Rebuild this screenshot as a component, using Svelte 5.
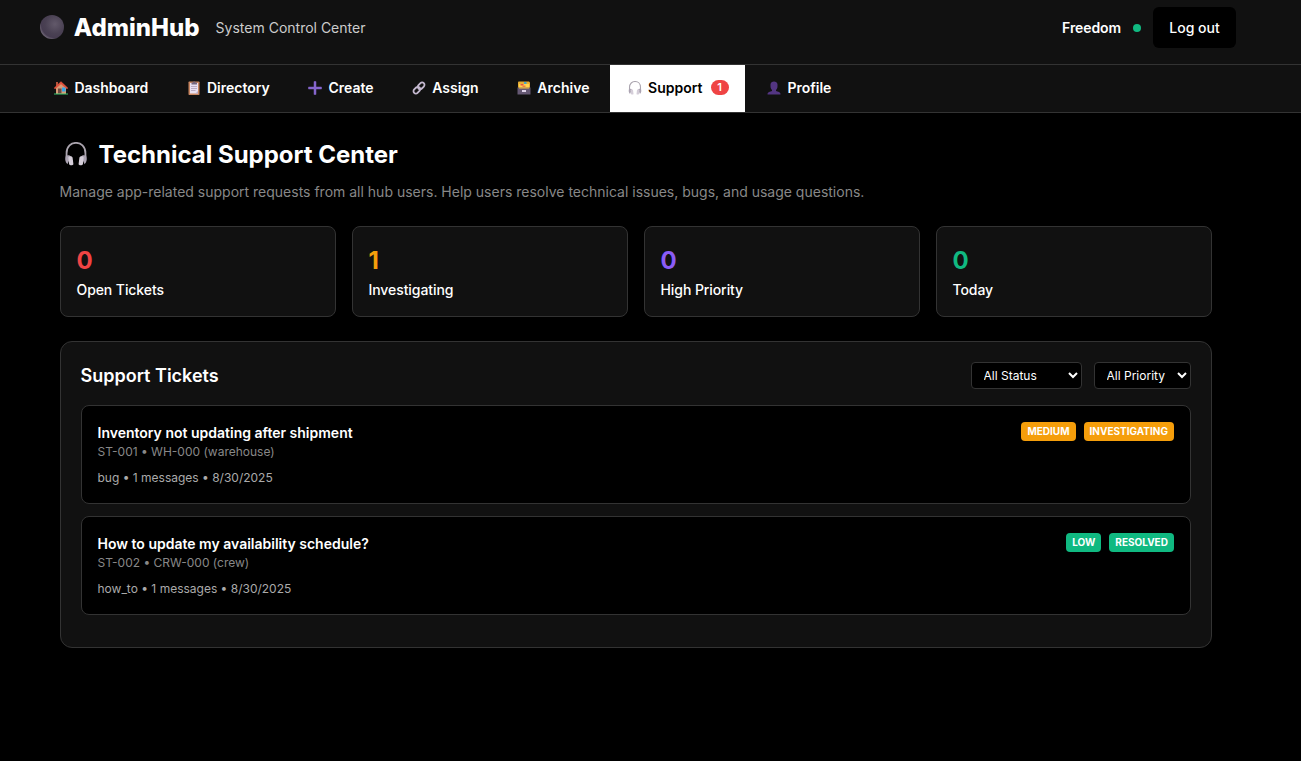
<script>
  const tabs = [
    { icon: 'house', label: 'Dashboard' },
    { icon: 'clipboard', label: 'Directory' },
    { icon: 'plus', label: 'Create' },
    { icon: 'link', label: 'Assign' },
    { icon: 'archive', label: 'Archive' },
    { icon: 'headphones', label: 'Support', badge: 1, active: true },
    { icon: 'person', label: 'Profile' }
  ];
  const stats = [
    { value: 0, label: 'Open Tickets', tone: 'red' },
    { value: 1, label: 'Investigating', tone: 'orange' },
    { value: 0, label: 'High Priority', tone: 'purple' },
    { value: 0, label: 'Today', tone: 'green' }
  ];
  const tickets = [
    {
      title: 'Inventory not updating after shipment',
      source: 'ST-001 • WH-000 (warehouse)',
      meta: 'bug • 1 messages • 8/30/2025',
      tags: ['MEDIUM', 'INVESTIGATING'],
      tone: 'orange'
    },
    {
      title: 'How to update my availability schedule?',
      source: 'ST-002 • CRW-000 (crew)',
      meta: 'how_to • 1 messages • 8/30/2025',
      tags: ['LOW', 'RESOLVED'],
      tone: 'green'
    }
  ];
</script>

{#snippet glyph(name)}
  <svg class="glyph" viewBox="0 0 28 28" aria-hidden="true">
    {#if name === 'house'}
      <path d="M4 2h4v8H4z" fill="#b5543c" />
      <path d="M4 13 14 3l10 10v13H4z" fill="#d79b77" />
      <path d="M14 1 0 14l2 2L14 6l12 10 2-2z" fill="#e0523d" stroke="#e0523d" stroke-width=".6" />
      <path d="M8 15h7v10H8z" fill="#6d4a43" />
      <path d="M16 13h7v8h-7z" fill="#32a7e8" />
      <path d="M0 25h28v2H0z" fill="#36c46f" />
    {:else if name === 'clipboard'}
      <rect x="3" y="1" width="22" height="27" rx="1.5" fill="#c98661" />
      <path d="M6 4h16v21H6z" fill="#e9e0f1" />
      <path d="M17 25h5v-5z" fill="#b8a9c9" />
      <path d="M9 3h3l1-2h3l1 2h3v4H9z" fill="#75677f" />
      <path d="M8 11h12M8 15h12M8 19h9" stroke="#a99bb5" stroke-width="1.5" />
    {:else if name === 'plus'}
      <path d="M12 1h4v11h11v4H16v11h-4V16H1v-4h11z" fill="#8565cc" stroke="#8565cc" stroke-linejoin="round" />
    {:else if name === 'link'}
      <g fill="none" stroke="#c5b9d0" stroke-width="3.6">
        <rect x="-7.5" y="-4.7" width="15" height="9.4" rx="4.7" transform="translate(18.3 9.7) rotate(-45)" />
        <rect x="-7.5" y="-4.7" width="15" height="9.4" rx="4.7" transform="translate(9.7 18.3) rotate(-45)" />
      </g>
    {:else if name === 'archive'}
      <path d="M2 3c0-1 1-2 2-2h20l2 2v13H2z" fill="#e6ad34" />
      <path d="M4 6h20v9H4z" fill="#ffd34e" />
      <path d="M7 6h6v3H7z" fill="#e95343" />
      <path d="M14 2h5v4h-5z" fill="#46a5c9" />
      <path d="M11 9h6v3h-6z" fill="#ed7d46" />
      <path d="M1 13h26v14H1z" fill="#655873" />
      <path d="M4 13h20v2H4z" fill="#f4bd3e" />
      <path d="M10 18h8v4h-8z" fill="#e0d4ea" />
    {:else if name === 'headphones'}
      <path d="M3 17v-4C3-3 25-3 25 13v4" fill="none" stroke="#aaa4ae" stroke-width="2.1" />
      <path d="M2 16c-1 3-1 7 2 10l4-9c-1-2-4-2-6-1zM26 16c1 3 1 7-2 10l-4-9c1-2 4-2 6-1z" fill="#aaa2b1" />
      <path d="M5 18c1-2 4-2 5 0l1 8c0 1-4 2-5 0zM23 18c-1-2-4-2-5 0l-1 8c0 1 4 2 5 0z" fill="#d5ced9" />
    {:else if name === 'person'}
      <path d="M7 7c0-8 14-8 14 0v4c0 4-2 6-3 7v2l6 2c2 1 3 2 3 5H1c0-3 1-4 3-5l6-2v-2c-1-1-3-3-3-7z" fill="#533582" />
    {/if}
  </svg>
{/snippet}

<div class="page">
  <header>
    <div class="brand">
      <svg class="moon" viewBox="0 0 24 24" aria-hidden="true">
        <defs>
          <radialGradient id="moon-fill" cx=".62" cy=".38" r=".66">
            <stop offset="0" stop-color="#62596a" />
            <stop offset=".6" stop-color="#4a4153" />
            <stop offset=".85" stop-color="#463c50" />
            <stop offset="1" stop-color="#706777" />
          </radialGradient>
        </defs>
        <circle cx="12" cy="12" r="12" fill="url(#moon-fill)" />
      </svg>
      <span class="name">AdminHub</span>
      <span class="tagline">System Control Center</span>
    </div>
    <div class="account">
      <span class="user">Freedom</span>
      <span class="dot"></span>
      <button class="logout">Log out</button>
    </div>
  </header>

  <nav>
    {#each tabs as tab}
      <a class="tab" class:active={tab.active}>
        <span class="slot">{@render glyph(tab.icon)}</span>
        <span>{tab.label}</span>
        {#if tab.badge}<span class="count">{tab.badge}</span>{/if}
      </a>
    {/each}
  </nav>

  <main>
    <h1><span class="title-icon">{@render glyph('headphones')}</span>Technical Support Center</h1>
    <p class="lead">Manage app-related support requests from all hub users. Help users resolve technical issues, bugs, and usage questions.</p>

    <section class="stats">
      {#each stats as stat}
        <div class="stat">
          <div class="value {stat.tone}">{stat.value}</div>
          <div class="label">{stat.label}</div>
        </div>
      {/each}
    </section>

    <section class="panel">
      <div class="panel-head">
        <h2>Support Tickets</h2>
        <div class="filters">
          <select class="status"><option>All Status</option></select>
          <select class="priority"><option>All Priority</option></select>
        </div>
      </div>
      {#each tickets as ticket}
        <article>
          <div class="info">
            <h3>{ticket.title}</h3>
            <div class="source">{ticket.source}</div>
            <div class="meta">{ticket.meta}</div>
          </div>
          <div class="tags">
            {#each ticket.tags as tag}
              <span class="tag {ticket.tone}">{tag}</span>
            {/each}
          </div>
        </article>
      {/each}
    </section>
  </main>
</div>

<style>
  :global(body) { background: #000; }
  .page {
    min-height: 761px;
    box-sizing: border-box;
    background: #000;
    color: #fff;
    font-family: Inter, sans-serif;
    font-size: 14px;
  }
  .page :global(*) { box-sizing: border-box; }
  header {
    display: flex;
    justify-content: space-between;
    height: 65px;
    padding: 7px 65px 16px 39.5px;
    background: #111;
    border-bottom: 1px solid #333;
  }
  .brand, .account { display: flex; align-items: center; height: 41px; }
  .moon { width: 24px; height: 24px; margin-top: -1px; }
  .name { margin-left: 10.3px; font-size: 24px; font-weight: 800; }
  .tagline { margin-left: 16px; color: #ccc; }
  .user { font-weight: 600; letter-spacing: -0.1px; }
  .dot { width: 8px; height: 8px; margin: 0 12px; border-radius: 50%; background: #10b981; }
  .logout {
    width: 83px;
    height: 41px;
    padding: 0;
    border: 0;
    border-radius: 6px;
    background: #000;
    color: #fff;
    font: 500 14px Inter, sans-serif;
  }
  nav {
    display: flex;
    gap: 4.3px;
    height: 48px;
    padding-left: 36px;
    background: #111;
    border-bottom: 1px solid #333;
  }
  .tab { display: flex; align-items: center; padding: 0 16px 2px; font-weight: 600; }
  .active { background: #fff; color: #000; }
  .slot { display: flex; width: 22.4px; padding-left: 2px; }
  .glyph { display: block; width: 14px; height: 14px; }
  .count {
    margin-left: 8px;
    width: 18.2px;
    border-radius: 10px;
    background: #ef4444;
    color: #fff;
    font-size: 11px;
    line-height: 15px;
    text-align: center;
  }
  main { width: 1152px; margin-left: 59.5px; padding-top: 23px; }
  h1 { display: flex; align-items: center; height: 36px; margin: 0; font-size: 24px; font-weight: 700; }
  .title-icon { width: 39px; padding-left: 4px; }
  .title-icon .glyph { width: 24px; height: 24px; }
  .lead { margin: 9px 0 0; color: #888; line-height: 22px; }
  .stats { display: grid; grid-template-columns: repeat(4, 1fr); gap: 16px; margin-top: 23px; }
  .stat { height: 91px; padding: 16px; background: #111; border: 1px solid #333; border-radius: 8px; }
  .value { height: 36px; font-size: 24px; font-weight: 700; line-height: 36px; }
  .value.red { color: #ef4444; }
  .value.orange { color: #f59e0b; }
  .value.purple { color: #8b5cf6; }
  .value.green { color: #10b981; }
  .label { line-height: 22px; font-weight: 500; letter-spacing: -0.08px; }
  .panel { height: 307px; margin-top: 24px; padding: 20px; background: #111; border: 1px solid #333; border-radius: 12px; }
  .panel-head { display: flex; align-items: center; justify-content: space-between; height: 27px; margin-bottom: 16px; }
  h2 { margin: 0; font-size: 18px; font-weight: 600; }
  .filters { display: flex; gap: 12px; }
  select {
    height: 27px;
    padding: 0 8px;
    border: 1px solid #333;
    border-radius: 4px;
    background: #000;
    color: #fff;
    font: 400 12px Inter, sans-serif;
  }
  .status { width: 111px; }
  .priority { width: 97px; }
  article {
    display: flex;
    justify-content: space-between;
    height: 99px;
    margin-bottom: 12px;
    padding: 16px 15.6px 16px 16px;
    background: #000;
    border: 1px solid #333;
    border-radius: 8px;
  }
  h3 { margin: 0; font-size: 14px; font-weight: 600; line-height: 22px; }
  .source { color: #888; font-size: 12px; line-height: 16px; }
  .meta { margin-top: 8px; color: #aaa; font-size: 12px; line-height: 20px; }
  .tags { display: flex; align-items: flex-start; gap: 8px; }
  .tag { padding: 0 6px; border-radius: 4px; font-size: 10px; font-weight: 700; line-height: 19px; }
  .tag.orange { background: #f59e0b; }
  .tag.green { background: #10b981; }
</style>
